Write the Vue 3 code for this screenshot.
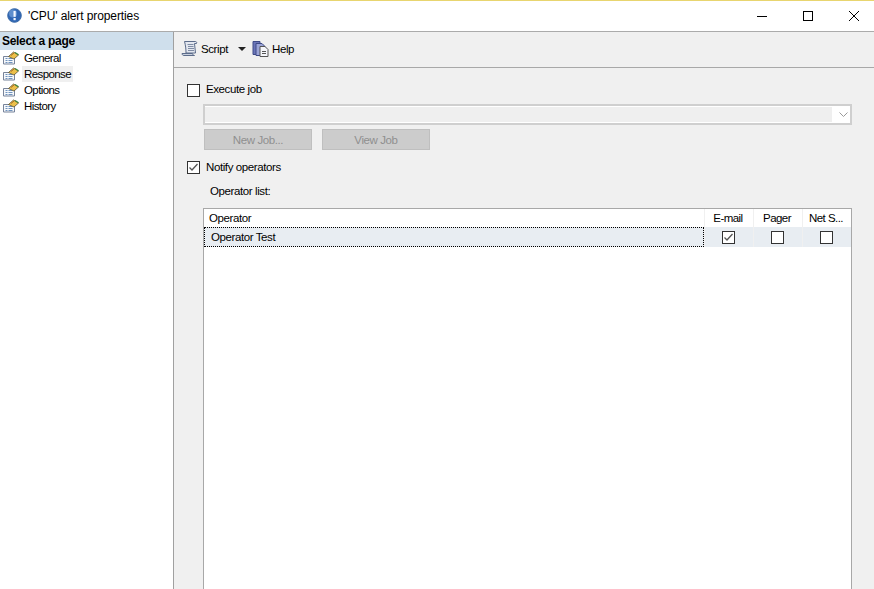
<template>
  <div class="dialog">
    <header class="titlebar">
      <svg class="title-icon" width="15" height="15" viewBox="0 0 15 15">
        <circle cx="7.500" cy="7.500" r="6.800" fill="#2f66b4" stroke="#3a6aa8" stroke-width="1" />
        <circle cx="6" cy="5.500" r="4" fill="#7fa9de" opacity="0.6" />
        <rect x="6.500" y="3" width="2.200" height="5.800" fill="#f4f8ff" />
        <rect x="6.500" y="10" width="2.200" height="2.200" fill="#f4f8ff" />
      </svg>
      <span class="title-text">'CPU' alert properties</span>
      <div class="window-btns">
        <svg width="12" height="12" viewBox="0 0 12 12"><path d="M1 6.500h10" stroke="#000" fill="none" /></svg>
        <svg width="12" height="12" viewBox="0 0 12 12"><rect x="1.500" y="1.500" width="9" height="9" stroke="#000" fill="none" /></svg>
        <svg width="12" height="12" viewBox="0 0 12 12"><path d="M1 1l10 10M11 1L1 11" stroke="#000" fill="none" /></svg>
      </div>
    </header>

    <div class="body">
      <aside class="sidebar">
        <div class="side-head">Select a page</div>
        <ul class="pages">
          <li v-for="p in pages" :key="p" class="page">
            <svg width="20" height="16" viewBox="0 0 20 16">
              <path d="M3.500 6.500h11v7.500h-11z" fill="#f6f8fb" stroke="#77839a" />
              <path d="M5.500 8.500h2M8.500 8.500h4M5.500 10.500h2M8.500 10.500h4M5.500 12.500h2M8.500 12.500h4" stroke="#6f93bd" fill="none" />
              <path d="M8.500 6.500l5-4.500 5 3-4.500 4z" fill="#ecc04a" stroke="#5b5436" stroke-width="0.800" />
              <path d="M15 2.500l3.500 2.200" stroke="#3f8a3a" stroke-width="1.200" fill="none" />
              <path d="M11 5.500l3-2.500" stroke="#b06f20" fill="none" />
            </svg>
            <span class="page-label" :class="{ active: p === 'Response' }">{{ p }}</span>
          </li>
        </ul>
      </aside>

      <main class="content">
        <div class="toolbar">
          <svg class="script-icon" width="17" height="17" viewBox="0 0 17 17">
            <path d="M3.500 1.500h11c1 0 1.500 1 1 2h-2l1 9.500H5c0-4-.5-8-1.500-11.500z" fill="#e3e7ef" stroke="#5c6c8a" />
            <path d="M1 13.500h10.500c0 1 1 2 2 2H3c-1.200 0-2-.8-2-2z" fill="#c8d0de" stroke="#5c6c8a" />
            <path d="M6.500 4.500h6M7 6.500h5.500M7 8.500h6M7 10.500h6" stroke="#7f8ca4" fill="none" />
          </svg>
          <span class="tool-label">Script</span>
          <span class="caret"></span>
          <svg class="help-icon" width="17" height="17" viewBox="0 0 17 17">
            <path d="M1 1.500h7v13H1z" fill="#6a75b8" stroke="#3e4a86" />
            <path d="M4 3.500h6l3 3v9H4z" fill="#9aa3d6" stroke="#3e4a86" />
            <path d="M8 6.500h5l3 3v7H8z" fill="#f5f6fa" stroke="#555" />
            <path d="M10 11.500h4M10 13.500h4" stroke="#555" fill="none" />
          </svg>
          <span class="tool-label">Help</span>
        </div>

        <div class="form">
          <label class="check-row">
            <span class="box"></span>
            <span class="check-text">Execute job</span>
          </label>
          <div class="select">
            <div class="select-inner"></div>
            <svg width="9" height="5" viewBox="0 0 9 5"><path d="M.5.500l4 4 4-4" stroke="#9a9a9a" fill="none" /></svg>
          </div>
          <div class="btn-row">
            <button class="btn" disabled>New Job...</button>
            <button class="btn" disabled>View Job</button>
          </div>
          <label class="check-row notify">
            <span class="box">
              <svg width="11" height="11" viewBox="0 0 11 11"><path d="M1.500 5.500l2.500 2.500 5.500-6" stroke="#555" stroke-width="1.300" fill="none" /></svg>
            </span>
            <span>Notify operators</span>
          </label>
          <div class="list-label">Operator list:</div>

          <div class="grid">
            <div class="grid-head">
              <div class="col-op head-op">Operator</div>
              <div class="col-c">E-mail</div>
              <div class="col-c">Pager</div>
              <div class="col-c">Net S...</div>
            </div>
            <div class="grid-row">
              <div class="col-op row-op">Operator Test</div>
              <div class="col-c">
                <span class="box">
                  <svg width="11" height="11" viewBox="0 0 11 11"><path d="M1.500 5.500l2.500 2.500 5.500-6" stroke="#555" stroke-width="1.300" fill="none" /></svg>
                </span>
              </div>
              <div class="col-c"><span class="box"></span></div>
              <div class="col-c"><span class="box"></span></div>
            </div>
          </div>
        </div>
      </main>
    </div>
  </div>
</template>

<script setup>
const pages = ['General', 'Response', 'Options', 'History']
</script>

<style>
html, body {
  margin: 0;
  overflow: hidden;
}
</style>

<style scoped>
.dialog {
  width: 874px;
  height: 589px;
  display: flex;
  flex-direction: column;
  overflow: hidden;
  background: #fff;
  font-family: "Liberation Sans", Arial, sans-serif;
  font-size: 11.5px;
  letter-spacing: -0.4px;
  color: #000;
}

.titlebar {
  height: 30px;
  display: flex;
  align-items: center;
  border-top: 1px solid #e8d56f;
  border-bottom: 1px solid #ababab;
  flex: none;
}

.title-icon {
  margin: -1px 0 0 7px;
}

.title-text {
  margin-left: 6px;
  font-size: 12px;
  letter-spacing: -0.1px;
}

.window-btns {
  margin-left: auto;
  margin-right: 14px;
  display: flex;
  gap: 34px;
}

.body {
  flex: 1;
  display: flex;
  min-height: 0;
}

.sidebar {
  width: 173px;
  border-right: 1px solid #a0a0a0;
  flex: none;
}

.side-head {
  height: 18px;
  line-height: 19px;
  padding-left: 2px;
  background: #cfdfec;
  font-weight: bold;
  font-size: 12px;
  letter-spacing: -0.3px;
}

.pages {
  list-style: none;
  margin: 0;
  padding: 0;
}

.page {
  height: 16px;
  display: flex;
  align-items: center;
}

.page-label {
  margin-left: 2px;
  padding: 0 2px;
  line-height: 16px;
  letter-spacing: -0.6px;
}

.page-label.active {
  background: #f0f0f0;
}

.content {
  flex: 1;
  background: #f0f0f0;
  display: flex;
  flex-direction: column;
  min-width: 0;
}

.toolbar {
  height: 33px;
  padding: 0 0 2px 7px;
  border-bottom: 1px solid #a8a8a8;
  display: flex;
  align-items: center;
  flex: none;
}

.tool-label {
  margin-left: 3px;
}

.caret {
  width: 0;
  height: 0;
  margin-left: 10px;
  margin-right: 6px;
  border-left: 4px solid transparent;
  border-right: 4px solid transparent;
  border-top: 4px solid #222;
}

.form {
  flex: 1;
  padding: 14px 22px 0 13px;
  display: flex;
  flex-direction: column;
  min-height: 0;
}

.check-row {
  display: flex;
  align-items: center;
  gap: 6px;
  height: 15px;
}

.check-row .box {
  margin-top: 1px;
}

.check-text {
  margin-top: -1px;
}

.box {
  width: 11px;
  height: 11px;
  border: 1px solid #333;
  background: #fff;
  display: inline-flex;
  align-items: center;
  justify-content: center;
  flex: none;
}

.select {
  margin: 7px 0 0 16px;
  height: 21px;
  border: 2px solid #cfcfcf;
  background: #fff;
  display: flex;
  align-items: center;
  box-sizing: border-box;
}

.select-inner {
  flex: 1;
  height: 15px;
  background: #efefef;
}

.select svg {
  margin: 0 2px 0 7px;
}

.btn-row {
  margin: 4px 0 0 17px;
  display: flex;
  gap: 10px;
}

.btn {
  width: 108px;
  height: 21px;
  padding: 0;
  background: #cccccc;
  border: 1px solid #bfbfbf;
  color: #8f8f8f;
  font: inherit;
  letter-spacing: inherit;
}

.notify {
  margin-top: 9px;
}

.list-label {
  margin: 10px 0 0 23px;
  line-height: 14px;
}

.grid {
  margin: 10px 0 0 16px;
  flex: 1;
  background: #fff;
  border: 1px solid #a8a8a8;
  border-bottom: 0;
  min-height: 0;
}

.grid-head,
.grid-row {
  display: flex;
}

.grid-head {
  height: 18px;
  line-height: 18px;
}

.grid-row {
  height: 20px;
  background: #e8edf2;
}

.col-op {
  width: 500px;
  box-sizing: border-box;
  flex: none;
}

.head-op {
  padding-left: 5px;
}

.row-op {
  line-height: 18px;
  border: 1px dotted #000;
  padding-left: 6px;
}

.col-c {
  width: 49px;
  padding-right: 2px;
  flex: none;
  display: flex;
  align-items: center;
  justify-content: center;
  border-left: 1px solid #f0f0f0;
  box-sizing: border-box;
}

.grid-head .col-c {
  letter-spacing: -0.55px;
}
</style>
